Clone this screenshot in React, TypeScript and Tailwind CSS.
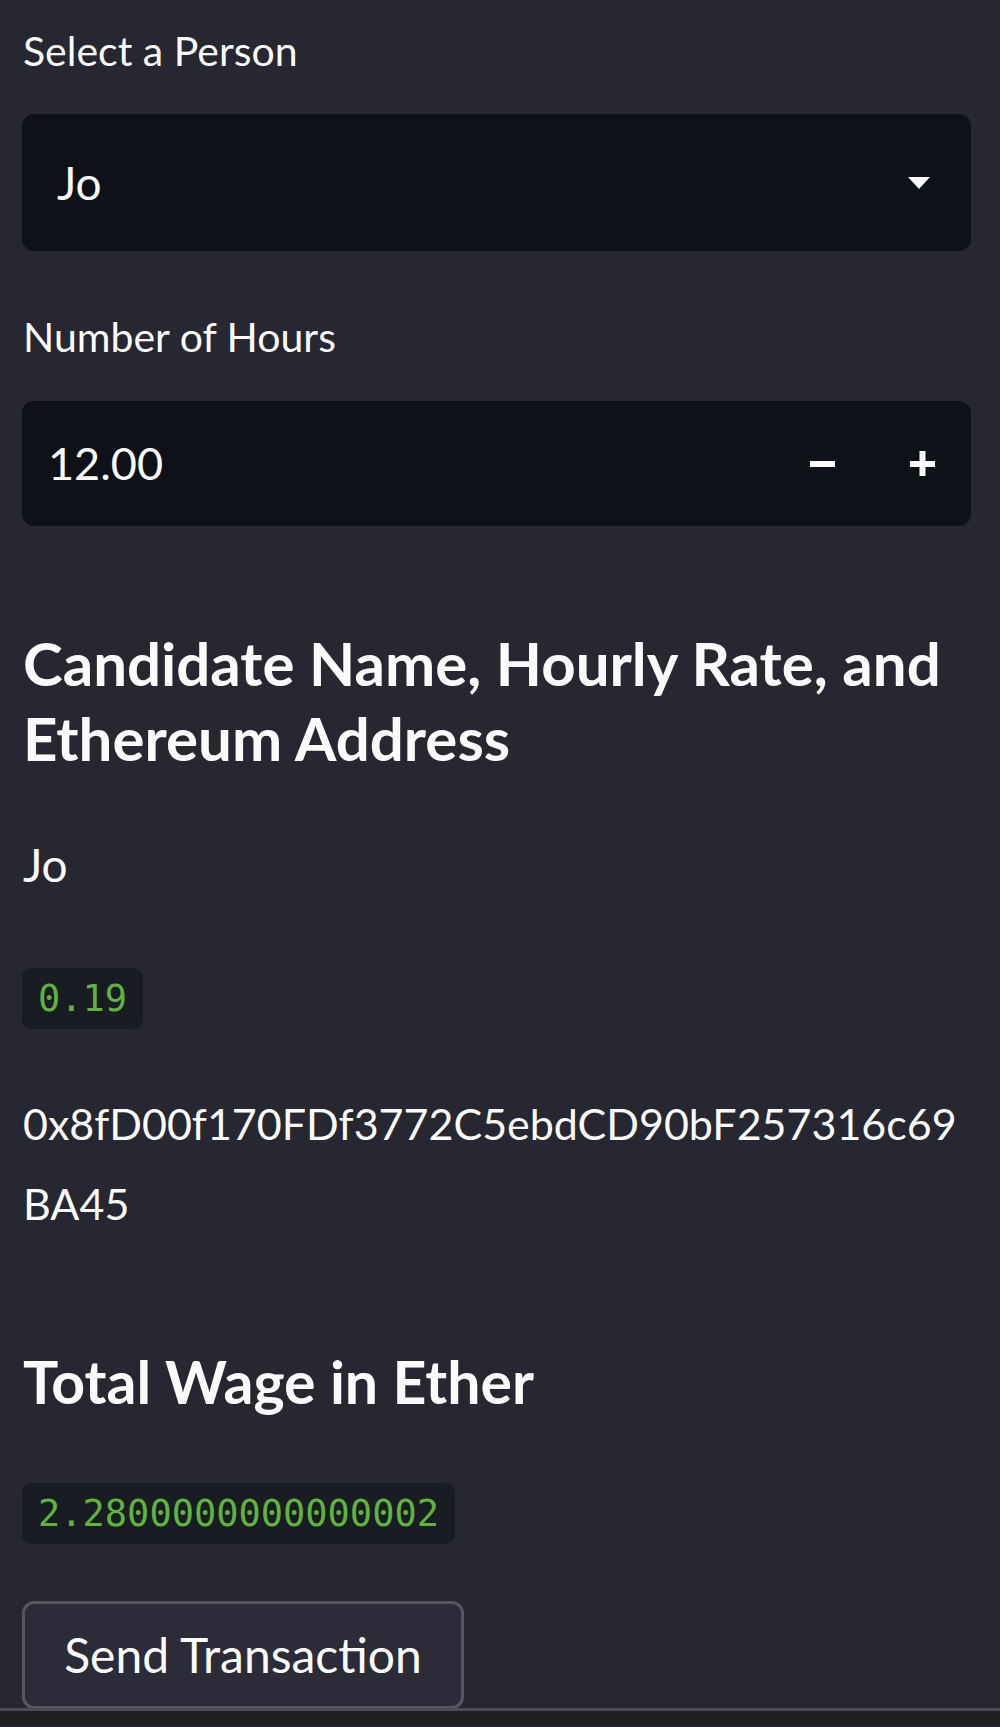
import React from 'react';

const sans = "font-['Lato','Noto_Sans',sans-serif]";
const mono = "font-['DejaVu_Sans_Mono','Liberation_Mono',monospace]";

const CodeValue: React.FC<{ value: string }> = ({ value }) => (
  <div className="flex">
    <code className={`${mono} h-[61px] flex items-center rounded-[9px] bg-[#1a1c24] px-[16px] text-[37px] leading-none text-[#5fb33f]`}>
      {value}
    </code>
  </div>
);

const App: React.FC = () => {
  return (
    <div className={`${sans} min-h-[1727px] h-[1727px] overflow-hidden bg-[#262730] text-[#fafafa] flex flex-col`}>
      <div className="pl-[22px] pr-[29px] flex flex-col">
        {/* Select */}
        <label className="pt-[23px] text-[41px] leading-[56px] pl-[1px]">Select a Person</label>
        <div className="mt-[35px] h-[137px] rounded-[12px] bg-[#0e1117] flex items-center justify-between pl-[35px] pr-[41px]">
          <span className="text-[46px]">Jo</span>
          <svg width="22" height="12" viewBox="0 0 22 12">
            <path d="M0 0 H22 L11 12 Z" fill="#fafafa" />
          </svg>
        </div>

        {/* Number input */}
        <label className="mt-[58px] text-[41px] leading-[56px] pl-[1px]">Number of Hours</label>
        <div className="mt-[36px] h-[125px] rounded-[12px] bg-[#0e1117] flex items-center justify-between pl-[26px] pr-[36px]">
          <span className="text-[45px]">12.00</span>
          <div className="flex items-center gap-[75px]">
            <svg width="25" height="25" viewBox="0 0 25 25">
              <rect x="0" y="10" width="25" height="6" fill="#fafafa" />
            </svg>
            <svg width="25" height="25" viewBox="0 0 25 25">
              <rect x="0" y="10" width="25" height="6" fill="#fafafa" />
              <rect x="9.5" y="0" width="6" height="25" fill="#fafafa" />
            </svg>
          </div>
        </div>

        {/* Candidate info */}
        <h3 className="mt-[100px] text-[60px] leading-[75px] font-bold pl-[1px]">
          Candidate Name, Hourly Rate, and Ethereum Address
        </h3>
        <p className="mt-[49px] text-[46px] leading-[80px] pl-[1px]">Jo</p>
        <div className="mt-[63px]">
          <CodeValue value="0.19" />
        </div>
        <p className="mt-[55px] text-[43px] leading-[80px] pl-[1px] whitespace-nowrap">
          0x8fD00f170FDf3772C5ebdCD90bF257316c69
          <br />
          BA45
        </p>

        {/* Wage */}
        <h3 className="mt-[100px] text-[59px] leading-[75px] font-bold pl-[1px]">Total Wage in Ether</h3>
        <div className="mt-[64px]">
          <CodeValue value="2.2800000000000002" />
        </div>

        <div className="mt-[57px] flex">
          <button className="h-[108px] w-[442px] rounded-[12px] border-[3px] border-[#55565f] bg-[#2b2c37] text-[48px] text-[#fafafa]">
            Send Transaction
          </button>
        </div>
      </div>
      <div className="-mt-[1px] h-[17px] border-t-[3px] border-[#4b4c56] bg-[#1f1f1f]" />
    </div>
  );
};

export default App;
